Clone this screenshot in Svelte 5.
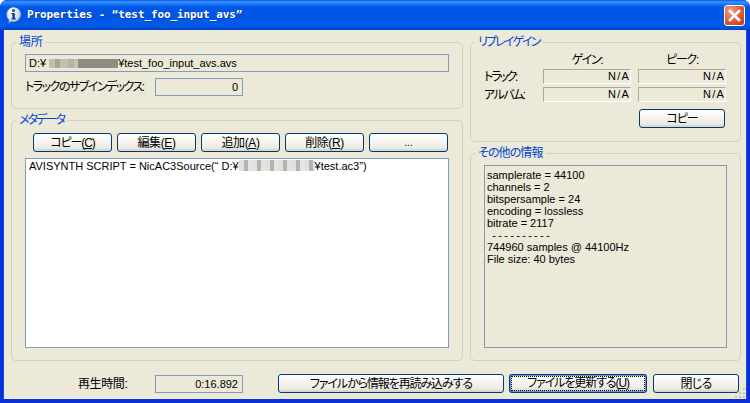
<script>
  const tabs = [
    { label: 'コピー(', key: 'C', kana: true },
    { label: '編集(', key: 'E' },
    { label: '追加(', key: 'A' },
    { label: '削除(', key: 'R' }
  ];
  const info = [
    'samplerate = 44100',
    'channels = 2',
    'bitspersample = 24',
    'encoding = lossless',
    'bitrate = 2117',
    ' ----------',
    '744960 samples @ 44100Hz',
    'File size: 40 bytes'
  ];
</script>

<div class="window">
  <header class="titlebar">
    <svg class="appicon" width="17" height="19" viewBox="0 0 17 19">
      <defs>
        <radialGradient id="ball" cx="0.35" cy="0.3" r="0.8">
          <stop offset="0" stop-color="#ffffff" />
          <stop offset="0.6" stop-color="#cfe0f6" />
          <stop offset="1" stop-color="#7f9fd0" />
        </radialGradient>
      </defs>
      <path d="M8.5 1a7.5 7.5 0 1 1-2.6 14.5L3.5 18l.4-4A7.5 7.5 0 0 1 8.5 1z" fill="url(#ball)" stroke="#2a5aa8" stroke-width=".5" />
      <rect x="7.2" y="3.4" width="2.6" height="2.4" fill="#123a8c" />
      <path d="M6.4 7h3.4v5.2h1v1.2H6.4v-1.2h1V8.2h-1z" fill="#123a8c" />
    </svg>
    <span class="title">Properties - “test_foo_input_avs”</span>
    <button class="close" aria-label="閉じる">
      <svg width="13" height="13" viewBox="0 0 13 13">
        <path d="M2 2l9 9M11 2l-9 9" stroke="#fff" stroke-width="2.6" stroke-linecap="square" fill="none" />
      </svg>
    </button>
  </header>

  <div class="client">
    <div class="columns">
      <div class="column left">
        <fieldset class="location">
          <legend>場所</legend>
          <div class="edit path small">D:¥<span class="blur wide"></span>¥test_foo_input_avs.avs</div>
          <div class="subindex">
            <span class="sublabel">トラックのサブインデックス:</span>
            <div class="edit value small">0</div>
          </div>
        </fieldset>

        <fieldset class="meta">
          <legend class="kana">メタデータ</legend>
          <div class="tabs">
            {#each tabs as t}
              <button class="btn tab" class:kanji={!t.kana}>{t.label}<u>{t.key}</u>)</button>
            {/each}
            <button class="btn tab dots">...</button>
          </div>
          <div class="list small">AVISYNTH SCRIPT = NicAC3Source(“ D:¥<span class="blur narrow"></span>¥test.ac3”)</div>
        </fieldset>
      </div>

      <div class="column right">
        <fieldset class="replay">
          <legend class="kana">リプレイゲイン</legend>
          <div class="gaingrid">
            <span></span>
            <span class="head">ゲイン:</span>
            <span class="head">ピーク:</span>
            <span class="rowlabel track">トラック:</span>
            <div class="sunken">N/A</div>
            <div class="sunken">N/A</div>
            <span class="rowlabel album">アルバム:</span>
            <div class="sunken">N/A</div>
            <div class="sunken">N/A</div>
          </div>
          <div class="copyrow"><button class="btn copy">コピー</button></div>
        </fieldset>

        <fieldset class="other">
          <legend class="mixed">その他の情報</legend>
          <div class="edit infobox small">
            {#each info as line}
              <div class="infoline" class:sep={line.includes('---')}>{line}</div>
            {/each}
          </div>
        </fieldset>
      </div>
    </div>

    <footer class="footer">
      <span class="durlabel">再生時間:</span>
      <div class="edit value small">0:16.892</div>
      <div class="actions">
        <button class="btn reload">ファイルから情報を再読み込みする</button>
        <button class="btn update"><span class="focus">ファイルを更新する(<u>U</u>)</span></button>
        <button class="btn closebtn">閉じる</button>
      </div>
    </footer>
    <svg class="grip" width="12" height="12" viewBox="0 0 12 12">
      <g fill="#c9c6b4">
        <rect x="9" y="1" width="2" height="2" />
        <rect x="5" y="5" width="2" height="2" />
        <rect x="9" y="5" width="2" height="2" />
        <rect x="1" y="9" width="2" height="2" />
        <rect x="5" y="9" width="2" height="2" />
        <rect x="9" y="9" width="2" height="2" />
      </g>
    </svg>
  </div>
</div>

<style>
  :global(body) {
    margin: 0;
    background: #fff;
  }
  * {
    box-sizing: border-box;
  }
  .window {
    width: 750px;
    height: 403px;
    display: flex;
    flex-direction: column;
    font: 12px/14px "Liberation Sans", "Noto Sans CJK JP", sans-serif;
    font-feature-settings: "palt";
    letter-spacing: -0.2px;
    color: #000;
    border-radius: 7px 7px 0 0;
    overflow: hidden;
    background: #0831d9;
  }
  .small {
    font-size: 11px;
    letter-spacing: 0;
  }
  .titlebar {
    height: 30px;
    flex: none;
    display: flex;
    align-items: center;
    padding: 0 5px 0 5px;
    background: linear-gradient(180deg, #0a5ae6 0, #3a93ff 2px, #1f79f8 4px, #0058e6 7px, #0055e3 18px, #005ce8 24px, #0050dc 28px, #0042c8 30px);
  }
  .appicon {
    flex: none;
    margin-top: 1px;
  }
  .title {
    margin-left: 5px;
    font: bold 11px/16px "DejaVu Sans Mono", monospace;
    letter-spacing: -0.1px;
    color: #fff;
    text-shadow: 1px 1px 0 #0f3fa8;
    white-space: pre;
  }
  .close {
    margin-left: auto;
    width: 21px;
    height: 21px;
    padding: 0;
    display: flex;
    align-items: center;
    justify-content: center;
    border: 1px solid #fff;
    border-radius: 3px;
    background: radial-gradient(circle at 30% 25%, #f0a089, #dc5a35 55%, #bf3a12);
  }
  .client {
    position: relative;
    flex: 1;
    margin: 0 4px 4px 4px;
    padding: 5px 5px 0 7px;
    background: #ece9d8;
    display: flex;
    flex-direction: column;
    box-shadow: -1px 0 0 #0a4fd8, 1px 0 0 #0a4fd8;
  }
  .columns {
    display: flex;
    gap: 7px;
    height: 326px;
  }
  .column {
    display: flex;
    flex-direction: column;
    gap: 4px;
  }
  .left {
    width: 452px;
  }
  .right {
    width: 271px;
  }
  fieldset {
    margin: 0;
    padding: 0 13px;
    border: 1px solid #d0d0bf;
    border-radius: 5px;
    min-width: 0;
  }
  legend {
    margin-left: -9px;
    padding: 0 3px;
    height: 14px;
    color: #0046d5;
  }
  legend.kana {
    letter-spacing: -1.9px;
  }
  legend.mixed {
    letter-spacing: -0.9px;
  }
  .location {
    height: 74px;
    padding-top: 5px;
  }
  .edit {
    border: 1px solid #7f9db9;
    background: #ece9d8;
    height: 18px;
    line-height: 16px;
    padding: 0 3px;
  }
  .path {
    white-space: nowrap;
  }
  .blur {
    display: inline-block;
    height: 9px;
    vertical-align: -1px;
  }
  .wide {
    width: 69px;
    margin-left: 3px;
    background: linear-gradient(90deg, #c2beb1 0 8%, #a9a69b 8% 16%, #c2bfb3 16% 28%, #b5b2a7 28% 36%, #c6c3b6 36% 42%, #8f8c84 42% 100%);
  }
  .narrow {
    width: 76px;
    height: 11px;
    background: repeating-linear-gradient(90deg, #dfe1de 0 5px, #b4b3ae 5px 9px, #e3e5e3 9px 13px);
  }
  .subindex {
    display: flex;
    align-items: center;
    margin-top: 6px;
  }
  .sublabel {
    width: 130px;
    white-space: nowrap;
    letter-spacing: -1.5px;
  }
  .value {
    width: 88px;
    text-align: right;
    padding-right: 4px;
    white-space: nowrap;
  }
  .meta {
    height: 248px;
    padding-top: 6px;
  }
  .tabs {
    display: flex;
    gap: 5px;
    margin-left: 8px;
  }
  .btn {
    display: block;
    font: inherit;
    letter-spacing: -1.1px;
    color: #000;
    height: 19px;
    padding: 0;
    border: 1px solid #003c74;
    border-radius: 3px;
    background: linear-gradient(180deg, #ffffff 0, #f6f5f0 40%, #ecebe5 80%, #d6d0c5 100%);
    white-space: nowrap;
  }
  .tab {
    width: 79px;
  }
  .tab.kanji {
    letter-spacing: -0.4px;
  }
  .tab.dots {
    letter-spacing: 0;
    font-size: 10px;
  }
  .list {
    margin-top: 6px;
    height: 190px;
    border: 1px solid #7f9db9;
    background: #fff;
    padding: 0 3px 2px;
    white-space: nowrap;
  }
  .replay {
    height: 107px;
  }
  .gaingrid {
    display: grid;
    grid-template-columns: 52px 88px 88px;
    grid-template-rows: 13px 15px 15px;
    column-gap: 7px;
    row-gap: 3px;
    margin: 4px 0 0 0;
    align-items: center;
  }
  .head {
    align-self: start;
    text-align: center;
    white-space: nowrap;
    letter-spacing: -1.3px;
  }
  .rowlabel {
    white-space: nowrap;
  }
  .track {
    letter-spacing: -2.2px;
  }
  .album {
    letter-spacing: -1.5px;
  }
  .sunken {
    height: 15px;
    font-size: 11px;
    border: 1px solid;
    border-color: #aca899 #fff #fff #aca899;
    line-height: 12px;
    text-align: right;
    padding-right: 0;
    letter-spacing: 1.2px;
  }
  .copyrow {
    display: flex;
    justify-content: flex-end;
    margin-top: 7px;
    margin-right: 2px;
  }
  .copy {
    width: 86px;
  }
  .other {
    height: 215px;
    padding-top: 5px;
  }
  .infobox {
    height: 183px;
    padding: 3px 2px;
    line-height: 12px;
  }
  .infoline {
    white-space: pre;
    height: 12px;
  }
  .sep {
    letter-spacing: 2.3px;
  }
  .footer {
    display: flex;
    align-items: center;
    padding-top: 13px;
  }
  .durlabel {
    margin-left: 67px;
    width: 77px;
    letter-spacing: -0.4px;
  }
  .footer .value {
    height: 18px;
  }
  .actions {
    display: flex;
    gap: 5px;
    margin-left: 35px;
  }
  .reload {
    width: 226px;
  }
  .update {
    width: 138px;
    border-width: 2px;
    border-color: #6f93d6;
    outline: 1px solid #003c74;
    outline-offset: -1px;
    padding: 1px;
  }
  .focus {
    display: block;
    height: 13px;
    line-height: 13px;
    outline: 1px dotted #000;
    outline-offset: 0;
  }
  .closebtn {
    width: 86px;
    margin-left: 1px;
    letter-spacing: -0.8px;
  }
  .grip {
    position: absolute;
    right: 0;
    bottom: 0;
  }
</style>
